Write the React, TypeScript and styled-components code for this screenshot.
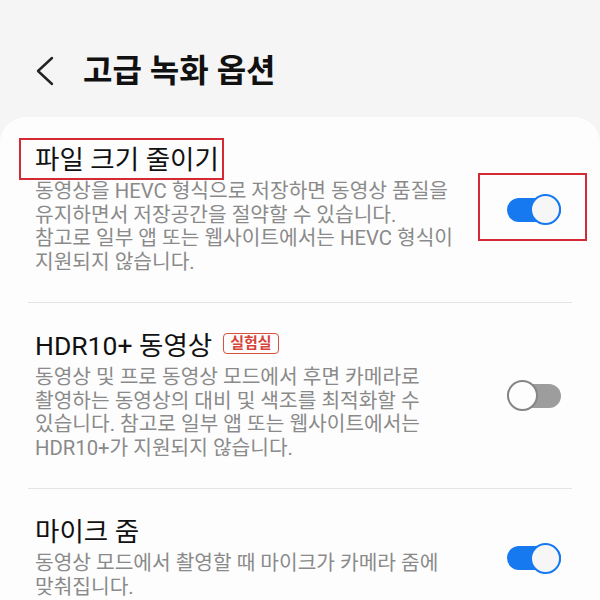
import React from "react";
import styled, { createGlobalStyle } from "styled-components";

interface Setting {
  title: string;
  lines: string[];
  on: boolean;
  badge?: string;
  markTitle?: boolean;
  markToggle?: boolean;
}

const settings: Setting[] = [
  {
    title: "파일 크기 줄이기",
    lines: [
      "동영상을 HEVC 형식으로 저장하면 동영상 품질을",
      "유지하면서 저장공간을 절약할 수 있습니다.",
      "참고로 일부 앱 또는 웹사이트에서는 HEVC 형식이",
      "지원되지 않습니다.",
    ],
    on: true,
    markTitle: true,
    markToggle: true,
  },
  {
    title: "HDR10+ 동영상",
    badge: "실험실",
    lines: [
      "동영상 및 프로 동영상 모드에서 후면 카메라로",
      "촬영하는 동영상의 대비 및 색조를 최적화할 수",
      "있습니다. 참고로 일부 앱 또는 웹사이트에서는",
      "HDR10+가 지원되지 않습니다.",
    ],
    on: false,
  },
  {
    title: "마이크 줌",
    lines: ["동영상 모드에서 촬영할 때 마이크가 카메라 줌에", "맞춰집니다."],
    on: true,
  },
];

const GlobalStyle = createGlobalStyle`
  html, body {
    margin: 0;
    padding: 0;
    height: 600px;
    overflow: hidden;
    background: #f5f5f5;
    font-family: Roboto, "Noto Sans CJK KR", sans-serif;
  }
`;

const Page = styled.div`
  width: 600px;
  height: 600px;
  background: #f5f5f5;
`;

const Header = styled.header`
  box-sizing: border-box;
  height: 117px;
  padding: 24px 0 0 36px;
  display: flex;
  align-items: center;
`;

const BackIcon = styled.svg`
  width: 18px;
  height: 30px;
  flex-shrink: 0;
`;

const PageTitle = styled.h1`
  margin: 0 0 0 29px;
  font-size: 32px;
  font-weight: 700;
  color: #111;
  line-height: 38px;
`;

const Card = styled.section`
  background: #fdfdfd;
  border-radius: 26px 26px 0 0;
  padding: 0 28px;
`;

const Row = styled.div<{ $last?: boolean }>`
  display: flex;
  align-items: center;
  padding: 28px 11px 28px 7px;
  border-bottom: ${(p) => (p.$last ? "none" : "1px solid #e4e4e4")};
`;

const TextCol = styled.div`
  flex: 1;
  min-width: 0;
`;

const TitleLine = styled.div`
  display: flex;
  align-items: center;
  height: 30px;
`;

const Title = styled.span<{ $marked?: boolean }>`
  position: relative;
  font-size: 26.5px;
  font-weight: 400;
  line-height: 30px;
  color: #111;
  white-space: nowrap;

  &::after {
    content: "";
    display: ${(p) => (p.$marked ? "block" : "none")};
    position: absolute;
    top: -7px;
    bottom: -5px;
    left: -16px;
    right: -5px;
    border: 2px solid #d32a33;
  }
`;

const Badge = styled.span`
  margin: -5px 0 0 11px;
  padding: 0 6px;
  height: 19px;
  line-height: 19px;
  border: 1.5px solid #d9503f;
  border-radius: 4px;
  color: #d6433a;
  font-size: 15px;
  font-weight: 700;
  white-space: nowrap;
`;

const Desc = styled.div`
  margin-top: 5px;
  font-size: 20.3px;
  line-height: 23.5px;
  color: #8a8a8a;
`;

const DescLine = styled.span`
  display: block;
  white-space: nowrap;
`;

const ToggleWrap = styled.div<{ $marked?: boolean }>`
  position: relative;
  width: 54px;
  height: 31px;
  flex-shrink: 0;

  &::after {
    content: "";
    display: ${(p) => (p.$marked ? "block" : "none")};
    position: absolute;
    top: -21px;
    bottom: -16px;
    left: -29px;
    right: -26px;
    border: 2px solid #d32a33;
  }
`;

const Track = styled.div<{ $on: boolean }>`
  position: absolute;
  top: 3.5px;
  left: 0;
  right: 0;
  height: 24px;
  border-radius: 12px;
  background: ${(p) => (p.$on ? "#1679f0" : "#9d9d9d")};
`;

const Knob = styled.div<{ $on: boolean }>`
  position: absolute;
  top: 0;
  ${(p) => (p.$on ? "right: 0;" : "left: 0;")}
  box-sizing: border-box;
  width: 31px;
  height: 31px;
  border-radius: 50%;
  background: ${(p) => (p.$on ? "#f6f6f6" : "#fdfdfd")};
  border: 2px solid ${(p) => (p.$on ? "#1679f0" : "#858585")};
`;

const Toggle: React.FC<{ on: boolean; marked?: boolean }> = ({ on, marked }) => (
  <ToggleWrap $marked={marked}>
    <Track $on={on} />
    <Knob $on={on} />
  </ToggleWrap>
);

const App: React.FC = () => {
  return (
    <Page>
      <GlobalStyle />
      <Header>
        <BackIcon viewBox="0 0 18 30">
          <polyline
            points="16,2 2,15 16,28"
            fill="none"
            stroke="#222"
            strokeWidth="2.4"
            strokeLinecap="round"
            strokeLinejoin="round"
          />
        </BackIcon>
        <PageTitle>고급 녹화 옵션</PageTitle>
      </Header>
      <Card>
        {settings.map((s, i) => (
          <Row key={s.title} $last={i === settings.length - 1}>
            <TextCol>
              <TitleLine>
                <Title $marked={s.markTitle}>{s.title}</Title>
                {s.badge && <Badge>{s.badge}</Badge>}
              </TitleLine>
              <Desc>
                {s.lines.map((l) => (
                  <DescLine key={l}>{l}</DescLine>
                ))}
              </Desc>
            </TextCol>
            <Toggle on={s.on} marked={s.markToggle} />
          </Row>
        ))}
      </Card>
    </Page>
  );
};

export default App;
